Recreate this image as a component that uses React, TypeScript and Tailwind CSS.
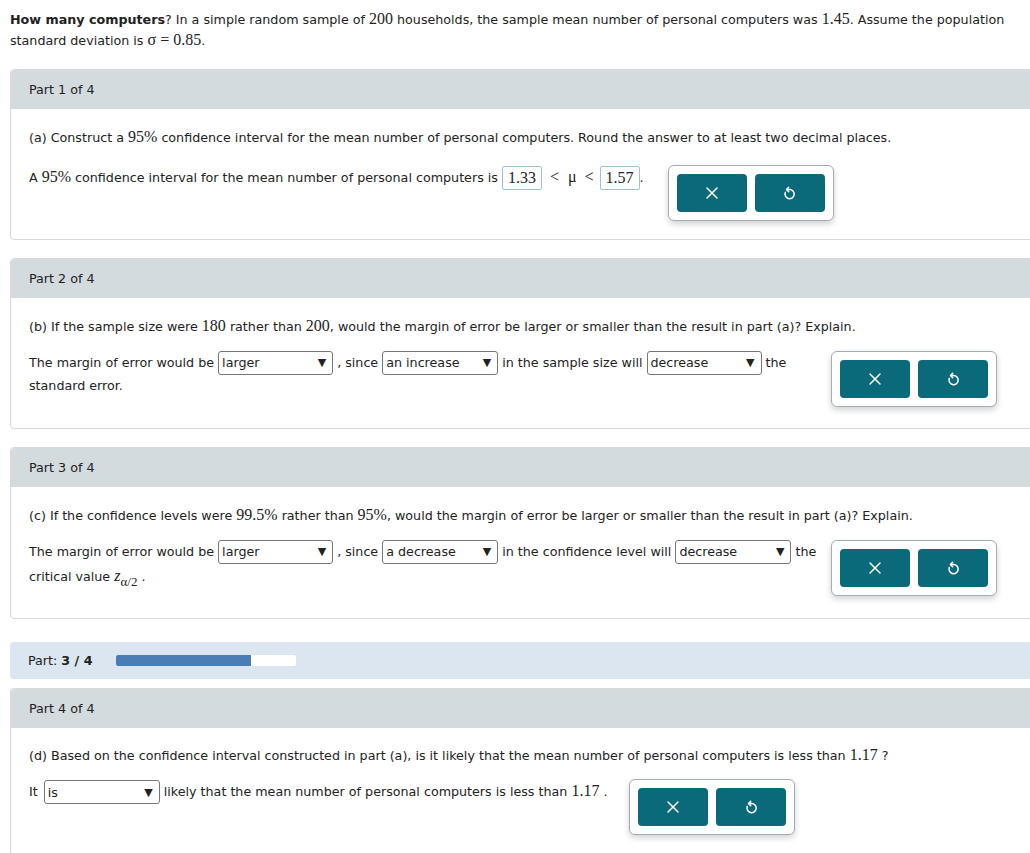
import React from "react";

const M = ({ children }: { children: React.ReactNode }) => (
  <span className="font-['Liberation_Serif',serif] text-[16px] leading-none">{children}</span>
);

const XIcon = () => (
  <svg width="14" height="14" viewBox="0 0 14 14" fill="none" stroke="white" strokeWidth="1.5" strokeLinecap="round">
    <path d="M2 2 L12 12 M12 2 L2 12" />
  </svg>
);

const ResetIcon = () => (
  <svg width="13" height="16" viewBox="0 0 13 16" fill="none" stroke="white" strokeWidth="1.5" strokeLinecap="round" strokeLinejoin="round">
    <path d="M6.5 4.5 A4.6 4.6 0 1 1 2.3 7.4" />
    <path d="M6.5 4.5 L3.6 4.5" />
    <path d="M5.6 2.4 L3.5 4.5 L5.6 6.6" />
  </svg>
);

const Buttons = () => (
  <div className="flex gap-[8px] p-[8px] border border-[#a3adb3] rounded-[6px] bg-white shadow-[0_3px_6px_rgba(0,0,0,0.18)] shrink-0">
    <button className="w-[70px] h-[38px] rounded-[4px] bg-[#0b6a7a] flex items-center justify-center">
      <XIcon />
    </button>
    <button className="w-[70px] h-[38px] rounded-[4px] bg-[#0b6a7a] flex items-center justify-center">
      <ResetIcon />
    </button>
  </div>
);

const Select = ({ value, w }: { value: string; w: string }) => (
  <span
    className={`inline-flex items-center justify-between h-[24px] border border-[#767676] rounded-[3px] pl-[3px] pr-[6px] align-middle bg-white ${w}`}
  >
    <span>{value}</span>
    <span className="text-[11px]">▼</span>
  </span>
);

const Box = ({ v }: { v: string }) => (
  <span className="inline-flex items-center justify-center h-[24px] w-[40px] border border-[#9cc3d4] rounded-[2px] align-middle font-['Liberation_Serif',serif] text-[16px] leading-none">
    {v}
  </span>
);

const Card = ({ title, children, last }: { title: string; children: React.ReactNode; last?: boolean }) => (
  <div className={`ml-[10px] w-[1040px] border border-[#d6d8da] rounded-[4px] ${last ? "rounded-b-none border-b-0" : ""}`}>
    <div className="h-[39px] bg-[#d3dbdf] pl-[18px] flex items-center rounded-t-[4px]">{title}</div>
    <div className="pl-[18px]">{children}</div>
  </div>
);

export default function App() {
  return (
    <div className="w-[1030px] h-[853px] overflow-hidden bg-white text-[12.7px] leading-[21px] text-[#222] font-['DejaVu_Sans','Verdana',sans-serif]">
      <div className="pl-[10px] pt-[9px] pr-[10px]">
        <span className="font-bold">How many computers</span>? In a simple random sample of <M>200</M> households, the sample mean
        number of personal computers was <M>1.45</M>. Assume the population standard deviation is{" "}
        <M>σ = 0.85</M>.
      </div>

      <div className="mt-[18px]">
        <Card title="Part 1 of 4">
          <div className="pt-[18px]">
            (a) Construct a <M>95%</M> confidence interval for the mean number of personal computers. Round the answer to at
            least two decimal places.
          </div>
          <div className="flex items-start mt-[17px] pb-[18px]">
            <div className="pt-[1px] whitespace-nowrap">
              A <M>95%</M> confidence interval for the mean number of personal computers is <Box v="1.33" />
              <span className="font-['Liberation_Serif',serif] text-[16px] leading-none">
                <span className="ml-[8px]">&lt;</span>
                <span className="ml-[9px]">μ</span>
                <span className="ml-[8px] mr-[6px]">&lt;</span>
              </span>
              <Box v="1.57" />.
            </div>
            <div className="ml-[24px]">
              <Buttons />
            </div>
          </div>
        </Card>
      </div>

      <div className="mt-[18px]">
        <Card title="Part 2 of 4">
          <div className="pt-[18px]">
            (b) If the sample size were <M>180</M> rather than <M>200</M>, would the margin of error be larger or smaller than
            the result in part (a)? Explain.
          </div>
          <div className="flex items-start mt-[14px] pb-[21px]">
            <div className="w-[802px] leading-[22px]">
              <div className="whitespace-nowrap">
                The margin of error would be <Select value="larger" w="w-[115px]" /> , since{" "}
                <Select value="an increase" w="w-[116px]" /> in the sample size will{" "}
                <Select value="decrease" w="w-[115px]" /> the
              </div>
              <div>standard error.</div>
            </div>
            <Buttons />
          </div>
        </Card>
      </div>

      <div className="mt-[18px]">
        <Card title="Part 3 of 4">
          <div className="pt-[18px]">
            (c) If the confidence levels were <M>99.5%</M> rather than <M>95%</M>, would the margin of error be larger or
            smaller than the result in part (a)? Explain.
          </div>
          <div className="flex items-start mt-[14px] pb-[22px]">
            <div className="w-[802px] leading-[22px]">
              <div className="whitespace-nowrap">
                The margin of error would be <Select value="larger" w="w-[115px]" /> , since{" "}
                <Select value="a decrease" w="w-[116px]" /> in the confidence level will{" "}
                <Select value="decrease" w="w-[116px]" /> the
              </div>
              <div className="mt-[2px]">
                critical value{" "}
                <span className="font-['Liberation_Serif',serif] text-[16px] italic leading-none">z</span>
                <span className="font-['Liberation_Serif',serif] text-[13px] leading-none relative top-[5px]">α/2</span> .
              </div>
            </div>
            <Buttons />
          </div>
        </Card>
      </div>

      <div className="mt-[23px] ml-[10px] w-[1040px] h-[37px] bg-[#dbe6f0] rounded-[4px] flex items-center pl-[18px]">
        <span>
          Part: <span className="font-bold">3 / 4</span>
        </span>
        <div className="ml-[24px] w-[180px] h-[11px] bg-white rounded-[2px] overflow-hidden">
          <div className="h-full bg-[#4a7db5]" style={{ width: "75%" }} />
        </div>
      </div>

      <div className="mt-[9px]">
        <Card title="Part 4 of 4" last>
          <div className="pt-[17px]">
            (d) Based on the confidence interval constructed in part (a), is it likely that the mean number of personal
            computers is less than <M>1.17</M> ?
          </div>
          <div className="flex items-start mt-[13px] pb-[20px]">
            <div className="pt-[1px] whitespace-nowrap">
              It <Select value="is" w="w-[116px] ml-[2px]" /> likely that the mean number of personal computers is less than{" "}
              <M>1.17</M> .
            </div>
            <div className="ml-[22px]">
              <Buttons />
            </div>
          </div>
        </Card>
      </div>
    </div>
  );
}
